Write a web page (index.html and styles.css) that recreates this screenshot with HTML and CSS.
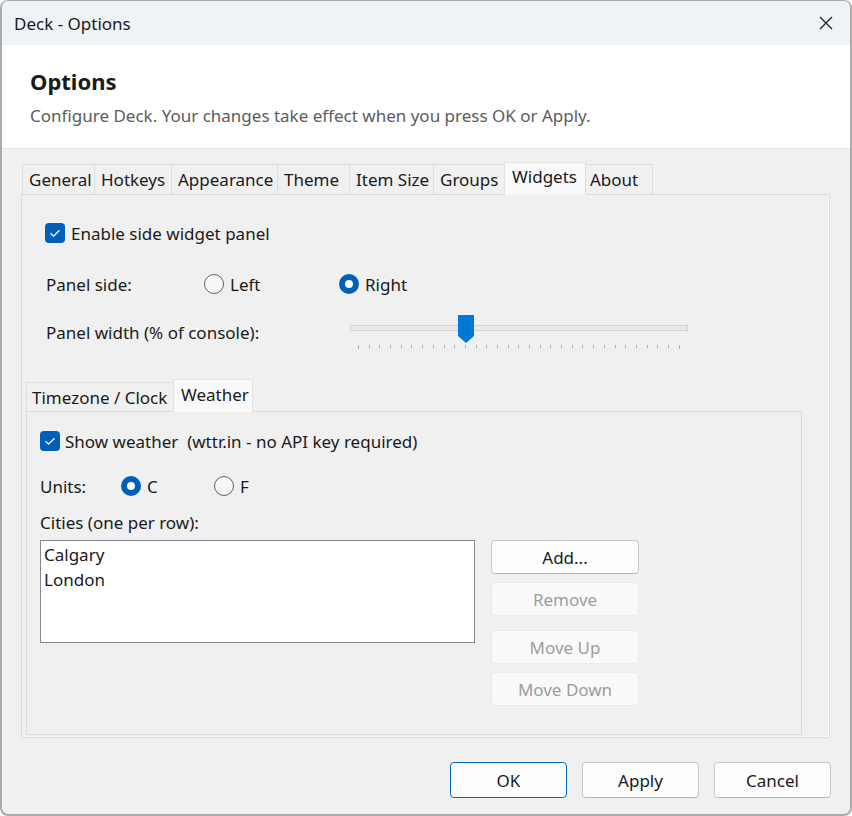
FILE: index.html
```html
<!DOCTYPE html>
<html lang="en">
<head>
    <meta charset="UTF-8">
    <title>Deck - Options</title>
    <link rel="stylesheet" href="styles.css">
</head>
<body>

<div class="window">
    <!-- Title bar -->
    <div class="titlebar">
        <span class="title">Deck - Options</span>
        <svg class="close" width="14" height="14" viewBox="0 0 14 14">
            <path d="M1 1 L13 13 M13 1 L1 13" stroke="#1a1a1a" stroke-width="1.2" fill="none"/>
        </svg>
    </div>

    <!-- Header -->
    <div class="header">
        <h1>Options</h1>
        <p>Configure Deck. Your changes take effect when you press OK or Apply.</p>
    </div>

    <div class="body">
        <div class="tabs main-tabs">
            <div class="tab">General</div>
            <div class="tab">Hotkeys</div>
            <div class="tab">Appearance</div>
            <div class="tab">Theme</div>
            <div class="tab">Item Size</div>
            <div class="tab">Groups</div>
            <div class="tab active">Widgets</div>
            <div class="tab">About</div>
        </div>

        <div class="panel">
            <div class="panel-top">
                <div class="row check-row">
                    <span class="checkbox">
                        <svg width="20" height="20" viewBox="0 0 20 20"><path d="M5.5 10.2 L8.6 13.2 L14.5 7.2" stroke="#fff" stroke-width="1.3" fill="none"/></svg>
                    </span>
                    Enable side widget panel
                </div>

                <div class="row side-row">
                    <span class="side-label">Panel side:</span>
                    <span class="radio-opt side-left"><span class="radio"></span>Left</span>
                    <span class="radio-opt"><span class="radio on"></span>Right</span>
                </div>

                <div class="row width-row">
                    <span class="width-label">Panel width (% of console):</span>
                    <div class="slider">
                        <div class="track"></div>
                        <svg class="thumb" width="16" height="28" viewBox="0 0 16 28"><polygon points="0,0 16,0 16,21 8,28 0,21" fill="#0078d4"/></svg>
                        <div class="ticks">
                            <i class="long"></i><i></i><i></i><i></i><i></i><i></i><i></i><i></i><i></i><i></i>
                            <i></i><i></i><i></i><i></i><i></i><i></i><i></i><i></i><i></i><i></i>
                            <i></i><i></i><i></i><i></i><i></i><i></i><i></i><i></i><i></i><i></i>
                            <i class="long"></i>
                        </div>
                    </div>
                </div>
            </div>

            <!-- Widget sub tabs -->
            <div class="subtabs">
                <div class="tabs sub-tabs">
                    <div class="tab">Timezone / Clock</div>
                    <div class="tab active">Weather</div>
                </div>
                <div class="subpanel">
                    <div class="row check-row">
                        <span class="checkbox">
                            <svg width="20" height="20" viewBox="0 0 20 20"><path d="M5.5 10.2 L8.6 13.2 L14.5 7.2" stroke="#fff" stroke-width="1.3" fill="none"/></svg>
                        </span>
                        Show weather&nbsp; (wttr.in - no API key required)
                    </div>

                    <div class="row units-row">
                        <span class="units-label">Units:</span>
                        <span class="radio-opt units-c"><span class="radio on"></span>C</span>
                        <span class="radio-opt"><span class="radio"></span>F</span>
                    </div>

                    <div class="row cities-label">Cities (one per row):</div>

                    <div class="cities">
                        <div class="listbox">
                            <div>Calgary</div>
                            <div>London</div>
                        </div>
                        <div class="list-buttons">
                            <button class="btn">Add...</button>
                            <button class="btn" disabled>Remove</button>
                            <button class="btn move-up" disabled>Move Up</button>
                            <button class="btn" disabled>Move Down</button>
                        </div>
                    </div>
                </div>
            </div>
        </div>

        <div class="footer">
            <button class="btn default">OK</button>
            <button class="btn">Apply</button>
            <button class="btn">Cancel</button>
        </div>
    </div>
</div>

</body>
</html>
```

FILE: styles.css
```css
body {
    margin: 0;
    background: #ffffff;
    font-family: "Noto Sans", "Open Sans", sans-serif;
    font-size: 17px;
    color: #1a1a1a;
}
.window {
    width: 852px;
    height: 816px;
    box-sizing: border-box;
    border: 2px solid #ababab;
    border-top-width: 1px;
    border-radius: 8px;
    overflow: hidden;
    display: flex;
    flex-direction: column;
    background: #f0f0f0;
}
.titlebar {
    height: 44px;
    flex: none;
    display: flex;
    align-items: center;
    justify-content: space-between;
    padding: 0 17px 0 12px;
    background: #eff3f6;
}
.title {
    font-size: 17px;
}
.header {
    flex: none;
    height: 104px;
    box-sizing: border-box;
    padding: 22px 28px 0;
    background: #ffffff;
    border-bottom: 1px solid #e3e3e3;
}
.header h1 {
    margin: 0;
    font-size: 22px;
    line-height: 28px;
    font-weight: bold;
}
.header p {
    margin: 9px 0 0;
    font-size: 17px;
    line-height: 24px;
    color: #5c5c5c;
}
.body {
    flex: 1;
    display: flex;
    flex-direction: column;
    padding: 15px 20px 0 19px;
}

/* Tabs */
.tabs {
    display: flex;
    align-items: flex-end;
    position: relative;
    z-index: 1;
}
.main-tabs {
    height: 30px;
    margin-left: 1px;
}
.tab {
    box-sizing: border-box;
    height: 30px;
    margin-right: -1px;
    padding-left: 6px;
    border: 1px solid #dcdcdc;
    border-bottom: none;
    line-height: 30px;
    white-space: nowrap;
}
.tab.active {
    height: 33px;
    margin-bottom: -1px;
    line-height: 28px;
    background: #f9f9f9;
    border-color: #e2e2e2;
}
.main-tabs .tab:nth-child(1) { width: 73px; }
.main-tabs .tab:nth-child(2) { width: 78px; }
.main-tabs .tab:nth-child(3) { width: 107px; }
.main-tabs .tab:nth-child(4) { width: 73px; }
.main-tabs .tab:nth-child(5) { width: 85px; }
.main-tabs .tab:nth-child(6) { width: 72px; }
.main-tabs .tab:nth-child(7) { width: 82px; padding-left: 7px; }
.main-tabs .tab:nth-child(8) { width: 68px; padding-left: 4px; }

.panel {
    flex: none;
    height: 544px;
    box-sizing: border-box;
    border: 1px solid #dadada;
    box-shadow: inset -1px -1px 0 #fafafa;
}
.panel-top {
    padding: 28px 24px 0;
}
.panel-top .checkbox {
    margin-left: -1px;
}
.row {
    display: flex;
    align-items: center;
    height: 20px;
    white-space: nowrap;
}
.checkbox {
    width: 20px;
    height: 20px;
    border-radius: 4px;
    background: #005fb8;
    margin-right: 6px;
    flex: none;
}
.checkbox svg {
    display: block;
}
.side-row {
    margin-top: 31px;
}
.side-label {
    width: 158px;
}
.side-left {
    width: 135px;
}
.radio-opt {
    display: flex;
    align-items: center;
}
.radio {
    width: 20px;
    height: 20px;
    box-sizing: border-box;
    border: 1px solid #616161;
    border-radius: 50%;
    background: #f7f7f7;
    margin-right: 6px;
    flex: none;
}
.radio.on {
    border: 6px solid #005fb8;
    background: #ffffff;
}
.width-row {
    height: 36px;
    margin-top: 20px;
}
.width-label {
    width: 304px;
}

/* Trackbar */
.slider {
    position: relative;
    width: 338px;
    height: 36px;
}
.track {
    margin-top: 11px;
    height: 6px;
    box-sizing: border-box;
    border: 1px solid #d4d4d4;
    background: #e8e8e8;
}
.thumb {
    position: absolute;
    left: 108px;
    top: 1px;
}
.ticks {
    display: flex;
    justify-content: space-between;
    align-items: flex-start;
    margin: 14px 8px 0;
}
.ticks i {
    width: 1px;
    height: 3px;
    background: #ababab;
}
.ticks i.long {
    height: 4px;
}

/* Sub tabs */
.subtabs {
    margin: 32px 0 0 4px;
    width: 776px;
}
.sub-tabs {
    height: 29px;
}
.sub-tabs .tab {
    height: 29px;
    line-height: 29px;
}
.sub-tabs .tab.active {
    height: 33px;
    line-height: 30px;
}
.sub-tabs .tab:nth-child(1) { width: 148px; padding-left: 5px; }
.sub-tabs .tab:nth-child(2) { width: 80px; padding-left: 7px; }
.subpanel {
    height: 324px;
    box-sizing: border-box;
    border: 1px solid #dadada;
    padding: 19px 13px 0;
}
.subpanel .checkbox {
    margin-right: 5px;
}
.units-row {
    margin-top: 25px;
}
.units-label {
    width: 81px;
}
.units-c {
    width: 93px;
}
.cities-label {
    margin-top: 16px;
}
.cities {
    display: flex;
    align-items: flex-start;
    margin-top: 8px;
}
.listbox {
    width: 435px;
    height: 103px;
    box-sizing: border-box;
    border: 1px solid #858591;
    background: #ffffff;
    padding: 1px 3px;
    line-height: 25px;
}
.list-buttons {
    display: flex;
    flex-direction: column;
    gap: 8px;
    margin-left: 16px;
}

/* Buttons */
.btn {
    width: 148px;
    height: 34px;
    box-sizing: border-box;
    border: 1px solid #c8c8c8;
    border-bottom-color: #b8b8b8;
    border-radius: 4px;
    background: #fdfdfd;
    font-family: inherit;
    font-size: 17px;
    color: #1a1a1a;
    padding: 0;
}
.btn:disabled {
    background: #f9f9f9;
    border-color: #ebebeb;
    color: #9d9d9d;
}
.move-up {
    margin-top: 6px;
}
.footer {
    flex: none;
    height: 76px;
    box-sizing: border-box;
    display: flex;
    justify-content: flex-end;
    gap: 15px;
    padding: 24px 0 0;
    margin-right: -1px;
}
.footer .btn {
    width: 117px;
    height: 36px;
}
.footer .btn.default {
    border-color: #0067c0;
}
```
